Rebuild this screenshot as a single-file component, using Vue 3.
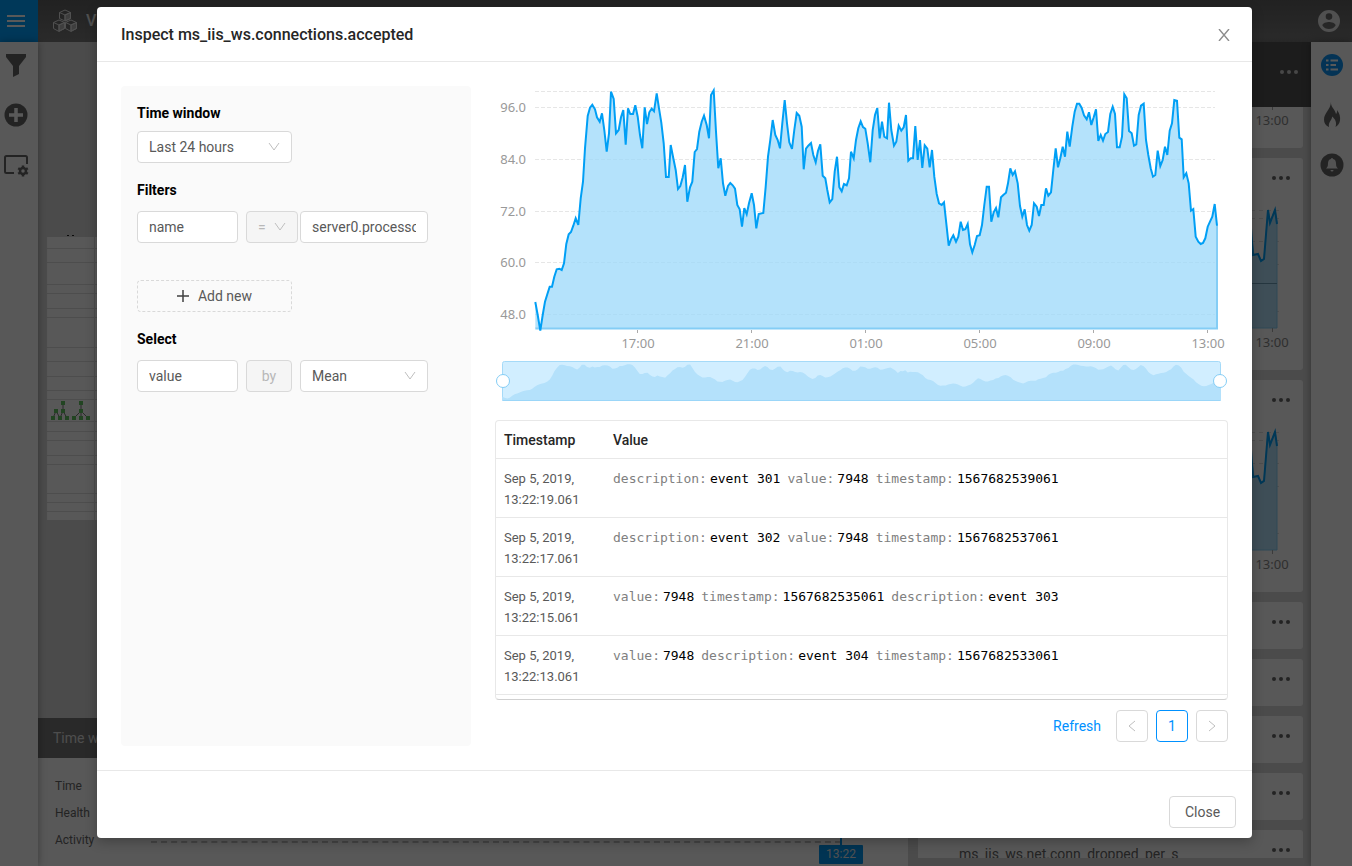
<script setup>
import { ref } from 'vue'

const windowRange = ref('Last 24 hours')
const filterKey = ref('name')
const operator = ref('=')
const filterValue = ref('server0.processor')
const field = ref('value')
const aggregate = ref('Mean')

// Samples as x,y pairs; each block starts at its own x offset.
const blocks = [
  {
    start: 0,
    points:
      '136,666 143,705 151,752 158,705 165,665 172,643 179,620 186,620 193,590 200,568 208,566 215,570 222,550 229,492 236,463 243,456 250,437 257,415 265,435 272,355 279,305 285,205 293,108 300,83 307,74 315,88 321,112 329,125 336,100 343,150 350,215 357,160 363,35 371,57 378,160 386,150 393,112 400,90 407,194 414,85 421,102 429,102 436,76 443,110 450,165 457,205 464,82 471,132 478,97 485,86 492,94 500,40 507,85 514,128 521,190 528,291 536,291 542,195 550,235 557,270 564,327 571,318 578,292 585,255 592,365 600,322 607,305 614,216 621,207 628,155 635,125 642,107 650,135 657,175 663,45 671,31 678,155 685,265 692,235 699,310 706,347 714,318 721,309 728,316 735,326 742,375 749,388 756,440'
  },
  {
    start: 750,
    points:
      '13,384 20,403 27,370 35,340 42,375 49,445 56,402 70,399 77,320 84,230 91,180 98,120 106,165 113,180 120,205 127,130 134,60 141,130 148,187 156,207 163,150 170,99 178,107 185,140 191,268 198,206 205,197 213,189 220,225 227,247 234,212 241,193 248,287 256,295 262,330 269,367 277,357 284,275 291,230 298,322 305,334 312,312 320,316 327,295 333,215 341,235 348,180 355,145 362,124 369,141 376,146 383,190 391,247 398,150 405,105 412,84 419,175 426,125 433,170 441,175 447,68 454,150 462,197 469,185 476,137 484,152 491,142 498,105 505,242 512,235 519,235 526,138 533,240 540,180 547,264 554,196 562,206 569,262 576,210 583,290 590,342 597,370 605,375 612,367 619,430 626,497 633,478 640,466 648,485 655,470 662,425 669,450 676,448 683,432 690,493 697,517 704,495 711,468 719,466'
  },
  {
    start: 1470,
    points:
      '6,435 13,375 20,320 27,320 34,425 41,397 48,384 55,412 63,352 70,345 78,338 84,310 91,265 98,285 105,274 113,310 120,378 127,410 134,388 141,435 148,452 155,435 162,370 170,380 177,408 184,375 191,375 198,325 205,347 213,337 220,270 227,205 234,262 241,235 248,200 255,230 262,155 269,200 277,140 284,95 291,71 298,71 305,84 312,106 320,118 327,97 334,135 341,112 348,88 355,183 362,165 369,182 376,162 384,156 391,102 398,80 405,102 411,202 419,202 426,170 433,43 440,55 447,153 455,160 462,197 469,193 476,105 483,77 491,71 498,180 505,225 512,265 519,290 526,285 533,212 541,258 548,240 555,200 562,225 569,152 576,130 583,60 591,62 598,173 605,178 611,292 619,280 626,310 633,392 640,387 647,470 655,485 662,492 669,489 676,475 683,440 690,425 697,410 704,372 711,437'
  }
]
const samples = blocks.flatMap((b) =>
  b.points.split(' ').map((p) => {
    const [x, y] = p.split(',').map(Number)
    return [(x + b.start) / 3 - 5, y / 3 - 6]
  })
)
const first = samples[0][0]
const last = samples[samples.length - 1][0]
const toPath = (pts) => 'M' + pts.map(([x, y]) => x.toFixed(1) + ' ' + y.toFixed(1)).join('L')
const linePath = toPath(samples)
const areaPath = linePath + `V242H${first}Z`

// Overview strip: the same series, smoothed and compressed.
const overview = samples.map(([x], i) => {
  const near = samples.slice(Math.max(0, i - 1), i + 2)
  const avg = near.reduce((s, p) => s + p[1], 0) / near.length
  return [7 + ((x - first) * 719) / (last - first), 276 + (avg - 4) * 0.158]
})
const overviewPath = toPath(overview) + 'V315H7Z'

const yTicks = [
  { y: 22, label: '96.0' },
  { y: 74, label: '84.0' },
  { y: 126, label: '72.0' },
  { y: 177, label: '60.0' },
  { y: 229, label: '48.0' }
]
const xTicks = ['17:00', '21:00', '01:00', '05:00', '09:00', '13:00'].map((label, i) => ({
  label,
  x: 142 + i * 114
}))

const rows = [
  { time: '13:22:19.061', pairs: [['description', 'event 301'], ['value', '7948'], ['timestamp', '1567682539061']] },
  { time: '13:22:17.061', pairs: [['description', 'event 302'], ['value', '7948'], ['timestamp', '1567682537061']] },
  { time: '13:22:15.061', pairs: [['value', '7948'], ['timestamp', '1567682535061'], ['description', 'event 303']] },
  { time: '13:22:13.061', pairs: [['value', '7948'], ['description', 'event 304'], ['timestamp', '1567682533061']] }
]

const gridRows = [11, 25, 47, 56, 71, 80, 110, 124, 139, 153, 162, 184, 194, 203, 218, 227, 256, 265, 274]
const nodes = [[16, 166], [9, 174], [16, 174], [6, 181], [13, 181], [20, 181], [34, 166], [34, 174], [27, 181], [34, 181], [41, 181]]
const cards = ['first', 'tall', 'tall', 'small', 'small', 'small', 'small', 'small']
</script>

<template>
  <div class="app">
    <header class="topbar">
      <button class="menu" aria-label="Menu">
        <svg width="18" height="12" viewBox="0 0 18 12"><path d="M0 1h18M0 6h18M0 11h18" stroke="#fff" stroke-width="2" /></svg>
      </button>
      <div class="brand">
        <svg width="26" height="24" viewBox="0 0 26 24" fill="none" stroke="#e4e4e4" stroke-linejoin="round">
          <path d="M13 1l5.500 2.500v6L13 12 7.500 9.500v-6zM7.500 3.500L13 6l5.500-2.500M13 6v6" />
          <path d="M7 11l5.500 2.500v6L7 22.500 1.500 19.500v-6zM1.500 13.500L7 16l5.500-2.500M7 16v6" />
          <path d="M19 11l5.500 2.500v6L19 22.500l-5.500-3v-6zM13.500 13.500L19 16l5.500-2.500M19 16v6" />
          <path d="M13 6l5.500-2.500v6L13 12zM7 16l5.500-2.500v6L7 22zM19 16l5.500-2.500v6L19 22z" fill="#e4e4e4" fill-opacity=".6" />
        </svg>
        <span>V</span>
      </div>
      <button class="account" aria-label="Account">
        <svg width="22" height="22" viewBox="2 2 20 20"><path fill="#e4e4e4" d="M12 2a10 10 0 100 20 10 10 0 000-20zm0 3a3 3 0 110 6 3 3 0 010-6zm0 14.200a7.200 7.200 0 01-6-3.220c.03-1.990 4-3.080 6-3.080s5.970 1.090 6 3.080a7.200 7.200 0 01-6 3.220z" /></svg>
      </button>
    </header>

    <div class="workspace">
      <nav class="rail left">
        <button aria-label="Filter"><svg width="22" height="24" viewBox="0 0 22 24"><path fill="#666" d="M1 1h20v3l-7 9v8l-6 3V13L1 4z" /></svg></button>
        <button aria-label="Add"><svg width="24" height="24" viewBox="0 0 24 24"><circle cx="12" cy="12" r="11.500" fill="#666" /><path d="M12 5v14M5 12h14" stroke="#fff" stroke-width="3.500" /></svg></button>
        <button aria-label="View settings">
          <svg width="26" height="24" viewBox="0 0 26 24" fill="none" stroke="#666">
            <path d="M11 20H3.500A1.500 1.500 0 012 18.500v-14A1.500 1.500 0 013.500 3h19A1.500 1.500 0 0124 4.500V11" stroke-width="2" />
            <circle cx="20" cy="18" r="3" stroke-width="2.500" />
            <path d="M20 12.500v2M20 21.500v2M15.200 15.200l1.800 1.100M23 19.700l1.800 1.100M15.200 20.800l1.800-1.100M23 16.300l1.800-1.100" stroke-width="2.500" />
          </svg>
        </button>
      </nav>

      <main class="stage">
        <svg class="map" width="60" height="290" viewBox="0 -7 60 290">
          <rect width="60" height="283" fill="#fbfbfb" />
          <path d="M20 -1.500h2M25 -1.500h2" stroke="#222" />
          <path v-for="y in gridRows" :key="y" :d="`M0 ${y}.5H60`" stroke="#dcdcdc" />
          <path d="M47.500 0V283" stroke="#dcdcdc" />
          <path d="M16 166v8M6 181l3-7 4 7 3-7 4 7M34 166v15M27 181l7-7 7 7" stroke="#777" fill="none" />
          <rect v-for="(n, i) in nodes" :key="i" :x="n[0] - 2" :y="n[1] - 2" width="4" height="4" fill="#62c462" />
        </svg>
        <section class="timeline">
          <h2>Time window</h2>
          <ul>
            <li>Time</li>
            <li>Health</li>
            <li>Activity</li>
          </ul>
          <div class="track"></div>
          <div class="now">13:22</div>
        </section>
      </main>

      <aside class="metrics">
        <div class="metrics-head">
          <button class="dots light" aria-label="More"><i></i><i></i><i></i></button>
        </div>
        <div class="cards">
          <article v-for="(kind, i) in cards" :key="i" class="card" :class="kind">
            <button v-if="kind !== 'first'" class="dots" aria-label="More"><i></i><i></i><i></i></button>
            <svg v-if="kind !== 'small'" class="mini" width="60" :height="kind === 'first' ? 41 : 212" :viewBox="kind === 'first' ? '0 171 60 41' : '0 0 60 212'">
              <g v-if="kind === 'tall'">
                <path d="M0 52.500h36M0 60.500h36M0 83.500h36M0 106.500h36M0 153.500h36" stroke="#ddd" stroke-dasharray="4 4" />
                <path d="M0 98L8 75l3 22 4-1 3 6 3-2L25 52l2 12 5-13 2 14V170H0z" fill="#b3e0f8" stroke="#84cdf5" />
                <path d="M8 70l2 27 5-1 3 7 3-2L25 52l2 13 5-13 2 14" fill="none" stroke="#009ff5" stroke-width="2" />
                <path v-if="i === 1" d="M0 125.500h34" stroke="#6a9cb5" />
              </g>
              <path d="M29.500 170v4" stroke="#aaa" />
              <text x="29" y="189">13:00</text>
            </svg>
            <span v-if="i === 7" class="name">ms_iis_ws.net.conn_dropped_per_s</span>
          </article>
        </div>
      </aside>

      <nav class="rail right">
        <button aria-label="List"><svg width="22" height="22" viewBox="0 0 22 22"><circle cx="11" cy="11" r="11" fill="#0d93f2" /><path d="M5 6.500h2.500M5 11h2.500M5 15.500h2.500M9.500 6.500H17M9.500 11h5.500M9.500 15.500H17" stroke="#fff" stroke-width="2" /></svg></button>
        <button aria-label="Hot"><svg width="18" height="26" viewBox="0 0 18 26"><path fill="#666" d="M8 0c-.5 5 4 7 5 12 1-1 1.200-2.500 1-4 2.500 3 3.500 7 3 10.500-.4 3-2 5-4.500 6.500 1.500-4 0-8-3.500-10.500C9.500 18 5 19.500 6 25 2.500 23.500 1 21 1 17.500 1 11 7.500 8 8 0z" /></svg></button>
        <button aria-label="Alerts"><svg width="24" height="24" viewBox="0 0 24 24"><circle cx="12" cy="12" r="11.500" fill="#666" /><path fill="#eee" d="M12 5a1 1 0 011 1c2.200.5 3 2.300 3 4.500 0 3 .8 4 2 5H6c1.200-1 2-2 2-5 0-2.200.8-4 3-4.500a1 1 0 011-1zM10.500 17h3a1.500 1.500 0 01-3 0z" /></svg></button>
      </nav>
    </div>

    <div class="overlay">
      <section class="modal" role="dialog" aria-labelledby="modal-title">
        <header class="modal-head">
          <h1 id="modal-title">Inspect ms_iis_ws.connections.accepted</h1>
          <button class="close-x" aria-label="Close dialog">
            <svg width="12" height="12" viewBox="0 0 12 12"><path d="M1 0l10 12M11 0L1 12" stroke="#8c8c8c" stroke-width="1.400" /></svg>
          </button>
        </header>

        <div class="modal-body">
          <form class="panel" @submit.prevent>
            <label class="caption" for="range">Time window</label>
            <div class="pick wide">
              <select id="range" v-model="windowRange"><option>Last 24 hours</option></select>
              <svg width="12" height="12" viewBox="0 0 12 12"><path d="M1 2l5 7 5-7" /></svg>
            </div>

            <label class="caption lower" for="key">Filters</label>
            <div class="line">
              <input id="key" v-model="filterKey" class="key" type="text" />
              <div class="pick op">
                <select v-model="operator" aria-label="Operator" disabled><option>=</option></select>
                <svg width="12" height="12" viewBox="0 0 12 12"><path d="M1 2l5 7 5-7" /></svg>
              </div>
              <input v-model="filterValue" class="val" type="text" aria-label="Filter value" />
            </div>
            <button class="add" type="button">
              <svg width="12" height="12" viewBox="0 0 12 12"><path d="M6 0v12M0 6h12" stroke="#404040" stroke-width="1.500" /></svg>
              Add new
            </button>

            <label class="caption lower" for="field">Select</label>
            <div class="line spaced">
              <input id="field" v-model="field" class="key" type="text" />
              <button class="by" type="button" disabled>by</button>
              <div class="pick val">
                <select v-model="aggregate" aria-label="Aggregate"><option>Mean</option></select>
                <svg width="12" height="12" viewBox="0 0 12 12"><path d="M1 2l5 7 5-7" /></svg>
              </div>
            </div>
          </form>

          <div class="data">
            <svg class="chart" viewBox="0 0 733 320" role="img" aria-label="Connections accepted">
              <path d="M40 5.500H720" class="grid" />
              <g v-for="t in yTicks" :key="t.label">
                <path :d="`M40 ${t.y - 0.5}H720`" class="grid" />
                <text x="31" :y="t.y + 4" text-anchor="end">{{ t.label }}</text>
              </g>
              <path :d="areaPath" fill="#9bd8f9" fill-opacity=".75" />
              <path :d="`M${first} 242.500H722V139`" fill="none" stroke="#84cdf5" stroke-width="2" />
              <path :d="linePath" fill="none" stroke="#009ff5" stroke-width="2" />
              <g v-for="t in xTicks" :key="t.label">
                <path :d="`M${t.x + 0.5} 244v3`" stroke="#aaa" />
                <text :x="t.x + 1" y="262" text-anchor="middle">{{ t.label }}</text>
              </g>
              <rect x="7.500" y="275.500" width="718" height="39" rx="2" fill="#d1eeff" stroke="#a5daf8" />
              <path :d="overviewPath" fill="#b4e1fb" />
              <path d="M8 314.500H725" stroke="#9bd6f8" />
              <circle cx="8" cy="295" r="6.500" class="handle" />
              <circle cx="725" cy="295" r="6.500" class="handle" />
            </svg>

            <div class="table-box">
              <table>
                <thead>
                  <tr><th class="when">Timestamp</th><th>Value</th></tr>
                </thead>
                <tbody>
                  <tr v-for="r in rows" :key="r.time">
                    <td>Sep 5, 2019,<br />{{ r.time }}</td>
                    <td>
                      <div class="pairs">
                        <span v-for="p in r.pairs" :key="p[0]" class="pair"><span>{{ p[0] }}:</span><b>{{ p[1] }}</b></span>
                      </div>
                    </td>
                  </tr>
                </tbody>
              </table>
            </div>

            <div class="pager">
              <a href="#">Refresh</a>
              <button disabled aria-label="Previous page"><svg width="12" height="12" viewBox="0 0 12 12"><path d="M9 1L3 6l6 5" /></svg></button>
              <button class="current">1</button>
              <button disabled aria-label="Next page"><svg width="12" height="12" viewBox="0 0 12 12"><path d="M3 1l6 5-6 5" /></svg></button>
            </div>
          </div>
        </div>

        <footer class="modal-foot"><button>Close</button></footer>
      </section>
    </div>
  </div>
</template>

<style>
body { overflow: hidden; }
</style>

<style scoped>
* { box-sizing: border-box; }
.app { position: relative; height: 100vh; overflow: hidden; display: flex; flex-direction: column; font: 14px/22px Roboto, "Open Sans", sans-serif; color: #595959; background: #d8d8d8; }
button { font: inherit; color: inherit; border: 0; background: none; padding: 0; display: flex; align-items: center; justify-content: center; }
h1, h2, ul { margin: 0; padding: 0; list-style: none; }

.topbar { display: flex; align-items: center; height: 42px; flex: none; background: linear-gradient(#606060, #7a7a7a); }
.menu { width: 38px; height: 42px; padding-right: 6px; background: #00a0ff; }
.brand { display: flex; align-items: center; gap: 8px; margin-left: 14px; flex: 1; color: #e4e4e4; font-size: 16px; font-weight: 500; }
.account { margin-right: 12px; }

.workspace { display: flex; flex: 1; min-height: 0; }
.rail { position: relative; z-index: 1; display: flex; flex-direction: column; align-items: center; gap: 26px; padding-top: 11px; background: #fbfbfb; box-shadow: 0 0 8px rgba(0, 0, 0, .35); flex: none; }
.rail button { height: 24px; }
.left { width: 38px; padding-right: 6px; }
.right { width: 41px; }
.stage { position: relative; flex: 1; display: flex; flex-direction: column; justify-content: space-between; padding-top: 188px; }
.map { margin-left: 9px; }
.timeline { position: relative; height: 148px; background: #fbfbfb; font-size: 12px; }
.timeline h2 { height: 40px; padding-left: 15px; font-size: 14px; line-height: 40px; font-weight: 400; color: #ddd; background: #777; }
.timeline ul { padding: 15px 17px; line-height: 27px; color: #666; }
.track { position: absolute; left: 113px; right: 67px; top: 123px; border-top: 2px dashed #c4c4c4; }
.now { position: absolute; right: 45px; bottom: 2px; width: 44px; height: 19px; line-height: 19px; text-align: center; color: #e4e4e4; background: #0094ee; border-radius: 1px; }
.now::before { content: ""; position: absolute; left: 21px; top: -8px; height: 8px; width: 2px; background: #0094ee; }

.metrics { width: 403px; flex: none; display: flex; flex-direction: column; box-shadow: -2px 0 6px rgba(0, 0, 0, .2); }
.metrics-head { height: 65px; flex: none; display: flex; justify-content: flex-end; align-items: center; padding: 0 13px 6px 0; background: #505050; }
.dots { display: flex; justify-content: space-between; width: 18px; height: 6px; }
.dots i { width: 4px; height: 4px; border-radius: 50%; background: #666; }
.dots.light i { background: #ccc; }
.cards { flex: 1; min-height: 0; margin: 0 8px 8px 10px; overflow: hidden; display: flex; flex-direction: column; gap: 10px; }
.card { position: relative; flex: none; height: 47px; background: #fbfbfb; border-radius: 3px; display: flex; justify-content: flex-end; }
.card.first { height: 41px; border-radius: 0 0 3px 3px; }
.card.tall { height: 212px; }
.card .dots { position: absolute; right: 13px; top: 17px; }
.name { position: absolute; left: 41px; top: 13px; font-size: 14px; color: #666; }
.mini text { font: 13px "Noto Sans", sans-serif; fill: #888; text-anchor: middle; }

.overlay { position: absolute; inset: 0; z-index: 2; display: flex; padding: 7px 100px 28px 97px; background: rgba(0, 0, 0, .65); }
.modal { flex: 1; min-width: 0; display: flex; flex-direction: column; background: #fff; border-radius: 4px; box-shadow: 0 4px 12px rgba(0, 0, 0, .25); }
.modal-head { height: 55px; flex: none; display: flex; align-items: center; justify-content: space-between; padding: 2px 22px 0 24px; border-bottom: 1px solid #e8e8e8; }
h1 { font-size: 16px; line-height: 24px; font-weight: 500; color: #262626; }
.modal-body { flex: 1; min-height: 0; display: flex; gap: 24px; padding: 24px; }
.panel { width: 350px; flex: none; padding: 16px; background: #fafafa; border-radius: 4px; }
.caption { display: block; margin-bottom: 7px; color: #000; font-weight: 700; }
.lower { margin: 16px 0 10px; }
input, select, .by, .add, .pager button, .modal-foot button { height: 32px; border: 1px solid #d9d9d9; border-radius: 4px; background: #fff; font: inherit; color: #595959; }
input { padding: 0 11px; min-width: 0; }
.pick { position: relative; }
.pick select { width: 100%; padding: 0 11px; appearance: none; }
.pick svg { position: absolute; right: 12px; top: 10px; pointer-events: none; fill: none; stroke: #bfbfbf; }
.wide, .add { width: 155px; }
.line { display: flex; }
.spaced { gap: 8px; }
.key { width: 101px; }
.op { width: 52px; margin: 0 2px 0 8px; }
.val { width: 128px; }
select:disabled, .by { background: #f5f5f5; color: #b8b8b8; opacity: 1; }
.by { width: 46px; }
.add { margin-top: 37px; gap: 9px; border-style: dashed; background: #fafafa; }

.data { flex: 1; min-width: 0; }
.chart { display: block; width: 100%; margin-bottom: 14px; }
.chart text { font: 13px "Noto Sans", sans-serif; fill: #999; }
.grid { stroke: #e6e6e6; stroke-dasharray: 4 2; }
.handle { fill: #fff; stroke: #84cdf5; }
.table-box { height: 280px; overflow: hidden; border: 1px solid #e8e8e8; border-bottom-color: #d0d0d0; border-radius: 4px; }
table { width: 100%; border-collapse: separate; border-spacing: 0; table-layout: fixed; }
th { height: 38px; padding: 0 8px; text-align: left; font-weight: 500; color: #262626; border-bottom: 1px solid #e8e8e8; }
.when { width: 109px; }
td { height: 59px; padding: 9px 8px 7px; vertical-align: top; font-size: 13px; line-height: 21px; border-bottom: 1px solid #e8e8e8; }
.pairs { display: flex; gap: 7px; font-family: "DejaVu Sans Mono", monospace; color: #808080; white-space: nowrap; }
.pair { display: flex; gap: 3px; }
.pair b { font-weight: 400; color: #000; }
.pager { display: flex; align-items: center; justify-content: flex-end; gap: 8px; margin-top: 10px; }
.pager a { margin-right: 7px; color: #0091ff; text-decoration: none; }
.pager button { width: 32px; }
.pager svg { fill: none; stroke: #bfbfbf; }
.pager .current { color: #0091ff; border-color: #0091ff; }
.modal-foot { height: 68px; flex: none; display: flex; justify-content: flex-end; padding: 25px 16px 10px; border-top: 1px solid #e8e8e8; }
.modal-foot button { width: 67px; }
</style>
